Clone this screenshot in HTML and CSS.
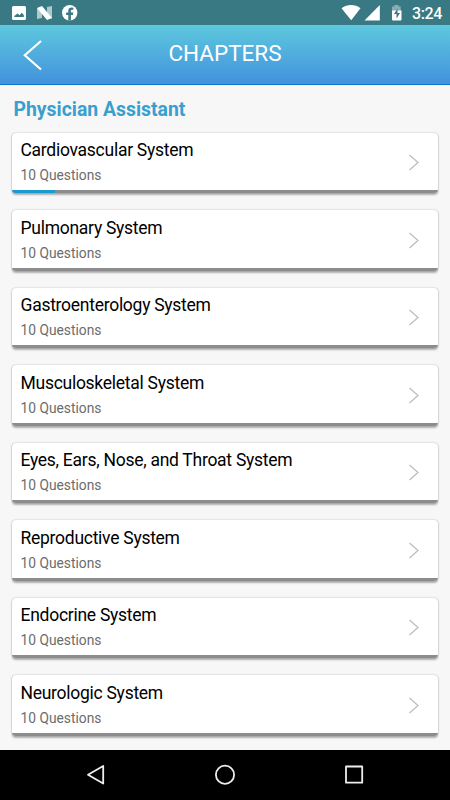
FILE: index.html
```html
<!DOCTYPE html>
<html lang="en">
<head>
<meta charset="utf-8">
<title>Chapters</title>
<link rel="stylesheet" href="styles.css">
</head>
<body>
<div class="status">
  <svg class="status-left" width="90" height="25" viewBox="0 0 90 25">
    <path fill="#fff" fill-rule="evenodd" d="M13.500 6h11a1.500 1.500 0 0 1 1.500 1.500v11a1.500 1.500 0 0 1-1.500 1.500h-11a1.500 1.500 0 0 1-1.500-1.500v-11A1.500 1.500 0 0 1 13.500 6zM14.300 17h9.500v-2l-2-2.300-2.200 2.500-2-1.700-3.300 2.500z"/>
    <path fill="#fff" opacity=".6" d="M37 8l5 3v7l-5 1zM47 7l5-1v13l-5-4z"/>
    <path fill="#fff" d="M37 8l5-2L52 18l-5 2z"/>
    <circle cx="69.700" cy="12.700" r="7.700" fill="#fff"/>
    <path fill="#397983" d="M68.300 20.400v-5.500h-2.200v-2.400h2.200v-1.700c0-2.200 1.300-3.300 3.200-3.300l1.900.2v2h-1.100c-1.100 0-1.400.6-1.400 1.300v1.500h2.400l-.4 2.400h-2v5.500z"/>
  </svg>
  <div class="status-right">
    <svg width="72" height="25" viewBox="0 0 72 25">
      <path fill="#fff" d="M1.500 8.200C7.500 4 15 4 20.500 8.200L11.200 20.200z"/>
      <path fill="#fff" d="M39.800 5v15.500H24.500z"/>
      <path fill="#fff" opacity=".4" d="M52 6.500h2.200V5h4.300v1.500h2.200V11H52z"/>
      <path fill="#fff" d="M52 10.500h9.500v9a1 1 0 0 1-1 1H53a1 1 0 0 1-1-1z"/>
      <path fill="#397983" d="M57.500 8.500l-3.500 5.500h2.500v4.500l3.500-5.500h-2.500z"/>
    </svg>
    <span class="clock">3:24</span>
  </div>
</div>
<header class="header">
  <svg class="back" width="20" height="32" viewBox="0 0 20 32"><path d="M18 1L1.800 15.200 18 29.500" fill="none" stroke="#fff" stroke-width="2.200"/></svg>
  <h1>CHAPTERS</h1>
</header>
<main>
  <h2>Physician Assistant</h2>
  <div class="list" id="list"></div>
</main>
<nav>
  <svg width="450" height="50" viewBox="0 0 450 50" fill="none" stroke="#eee" stroke-width="1.800" stroke-linejoin="round">
    <path d="M103.200 16v17.500L88 24.700z"/>
    <circle cx="225" cy="24.700" r="9.100"/>
    <rect x="346" y="16.500" width="16.200" height="16.200"/>
  </svg>
</nav>
<script src="chapters.js"></script>
</body>
</html>
```
FILE: styles.css
```css
* { box-sizing: border-box; }
body {
  margin: 0;
  width: 450px;
  height: 800px;
  overflow: hidden;
  display: flex;
  flex-direction: column;
  background: #f7f7f7;
  font-family: Roboto, sans-serif;
}
svg { display: block; flex: none; }
.status {
  flex: none;
  height: 25px;
  display: flex;
  justify-content: space-between;
  background: #397983;
  color: #fff;
}
.status-right { display: flex; padding-right: 8px; }
.clock {
  width: 30px;
  font-size: 16px;
  letter-spacing: -0.400px;
  line-height: 28px;
  font-weight: 500;
  white-space: nowrap;
}
.header {
  flex: none;
  height: 60px;
  display: grid;
  grid-template-columns: 44px 1fr 44px;
  background: linear-gradient(#5ec8de, #4292dc);
  border-bottom: 1px solid #087bd1;
}
.back { margin: 15px 0 0 23px; }
h1 {
  margin: 0;
  color: #fff;
  text-align: center;
  font-size: 22.500px;
  line-height: 57px;
  font-weight: 400;
}
main { flex: 1; padding: 0 12px; overflow: hidden; }
h2 {
  margin: 0;
  padding: 12px 0 0 1.500px;
  height: 47.500px;
  color: #389fcf;
  font-size: 19.400px;
  line-height: 25px;
  font-weight: 700;
}
.list { display: flex; flex-direction: column; gap: 17px; }
.card {
  flex: none;
  height: 60.500px;
  display: flex;
  flex-direction: column;
  border-radius: 4px;
  overflow: hidden;
  background: #fff;
  box-shadow: 0 0 1.500px rgba(0, 0, 0, .3), 0 1.500px 2px rgba(0, 0, 0, .28);
}
.row {
  flex: 1;
  display: flex;
  justify-content: space-between;
  padding: 0 18px 0 8.500px;
}
h3 {
  margin: 6.500px 0 0;
  font-size: 17.500px;
  letter-spacing: -0.270px;
  line-height: 22px;
  font-weight: 400;
  color: #000;
}
p {
  margin: 5px 0 0;
  font-size: 13.800px;
  line-height: 18px;
  color: #6c6c6c;
}
.next { margin-top: 21.500px; }
.bar { height: 3px; background: #8c8c8c; }
.fill { height: 3px; background: #199bd2; }
nav { flex: none; height: 50.500px; background: #000; }
```
FILE: chapters.js
```js
const chapters = [
  ["Cardiovascular System", 10],
  ["Pulmonary System", 0],
  ["Gastroenterology System", 0],
  ["Musculoskeletal System", 0],
  ["Eyes, Ears, Nose, and Throat System", 0],
  ["Reproductive System", 0],
  ["Endocrine System", 0],
  ["Neurologic System", 0]
];
document.getElementById("list").innerHTML = chapters.map(([name, done]) => `
  <article class="card">
    <div class="row">
      <div><h3>${name}</h3><p>10 Questions</p></div>
      <svg class="next" width="12" height="17" viewBox="0 0 12 17"><path d="M1.500 1L10 8.500 1.500 16" fill="none" stroke="#bbb" stroke-width="1.200"/></svg>
    </div>
    <div class="bar"><div class="fill" style="width:${done}%"></div></div>
  </article>`).join("");
```
